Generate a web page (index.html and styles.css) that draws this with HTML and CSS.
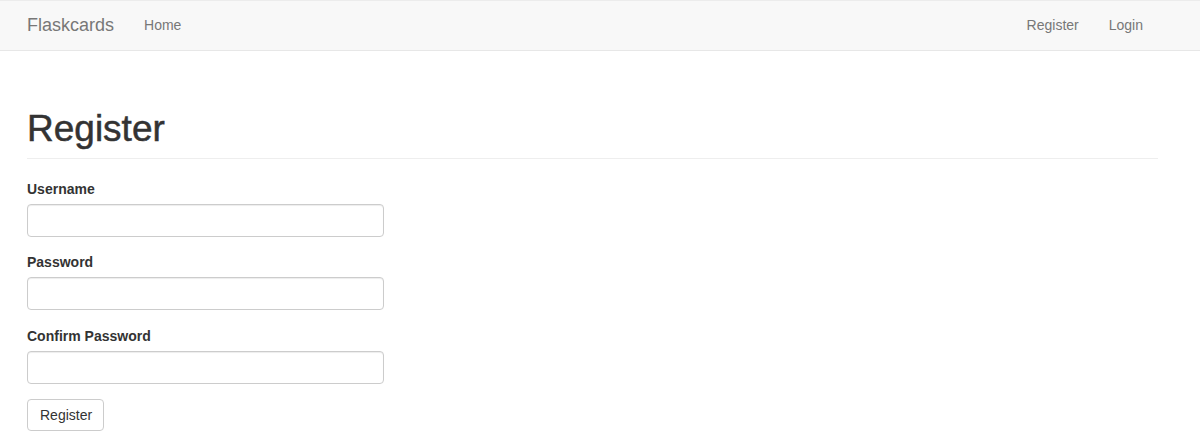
FILE: index.html
```html
<!DOCTYPE html>
<html lang="en">
<head>
<meta charset="utf-8">
<title>Flaskcards - Register</title>
<link rel="stylesheet" href="styles.css">
</head>
<body>
<nav class="navbar">
  <div class="container nav-inner">
    <div class="nav-left">
      <a class="brand" href="#">Flaskcards</a>
      <a class="nav-link" href="#">Home</a>
    </div>
    <div class="nav-right">
      <a class="nav-link" href="#">Register</a>
      <a class="nav-link" href="#">Login</a>
    </div>
  </div>
</nav>
<main class="container">
  <div class="page-header">
    <h1>Register</h1>
  </div>
  <form class="form">
    <div class="form-group">
      <label for="username">Username</label>
      <input id="username" class="form-control" type="text">
    </div>
    <div class="form-group">
      <label for="password">Password</label>
      <input id="password" class="form-control" type="password">
    </div>
    <div class="form-group">
      <label for="confirm">Confirm Password</label>
      <input id="confirm" class="form-control" type="password">
    </div>
    <button class="btn" type="submit">Register</button>
  </form>
</main>
</body>
</html>
```
FILE: styles.css
```css
* { box-sizing: border-box; }
html, body { margin: 0; padding: 0; background: #fff; }
body {
  font-family: "Liberation Sans", Arial, Helvetica, sans-serif;
  font-size: 14px;
  line-height: 20px;
  color: #333;
}
a { text-decoration: none; }

.container {
  width: 1131px;
  margin-left: 27px;
}

.navbar {
  background: #f8f8f8;
  border-top: 1px solid #ececec;
  border-bottom: 1px solid #e7e7e7;
  height: 51px;
}
.nav-inner {
  display: flex;
  justify-content: space-between;
  align-items: flex-start;
  height: 49px;
}
.nav-left, .nav-right { display: flex; }
.brand {
  font-size: 18px;
  line-height: 20px;
  color: #777;
  padding: 14px 15px 15px 0;
}
.nav-link {
  font-size: 14px;
  line-height: 20px;
  color: #777;
  padding: 14px 15px 15px;
}

.page-header {
  margin-top: 58px;
  padding-bottom: 9px;
  border-bottom: 1px solid #eee;
  margin-bottom: 20px;
}
.page-header h1 {
  margin: 0;
  font-size: 37px;
  line-height: 39.5px;
  font-weight: normal;
  color: #333;
  -webkit-text-stroke: 0.5px #333;
}

.form-group { margin-bottom: 15.5px; }
.form-group label {
  display: block;
  font-weight: bold;
  font-size: 14px;
  line-height: 20px;
  margin-bottom: 5px;
}
.form-control {
  display: block;
  width: 357px;
  height: 33px;
  padding: 6px 12px;
  font-size: 14px;
  font-family: inherit;
  color: #555;
  background: #fff;
  border: 1px solid #ccc;
  border-radius: 4px;
  box-shadow: inset 0 1px 1px rgba(0,0,0,0.075);
}
.btn {
  display: inline-block;
  font-family: inherit;
  font-size: 14px;
  line-height: 20px;
  padding: 5px 11px 5px 12px;
  color: #333;
  background: #fff;
  border: 1px solid #ccc;
  border-radius: 4px;
  cursor: pointer;
}
```
